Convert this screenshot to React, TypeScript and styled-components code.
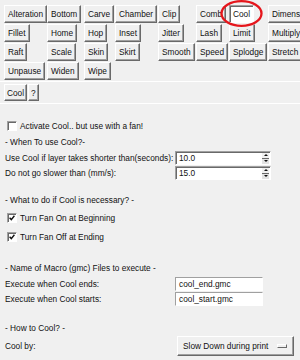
import React from 'react';
import styled, { createGlobalStyle } from 'styled-components';

/* global */
const GlobalStyle = createGlobalStyle`
  html, body {
    margin: 0;
    padding: 0;
    background: #f0f0f0;
  }
  body {
    font-family: "Liberation Sans", Arial, sans-serif;
    font-size: 8.3px;
    color: #111111;
  }
`

const Window = styled.div`
  position: relative;
  width: 300px;
  height: 360px;
  overflow: hidden;
  background: #f0f0f0;
`

/* plugin buttons */
const ToolGrid = styled.div`
  display: grid;
  grid-template-columns: 43px 37px 31px 43px 38px 33px 39px 1fr;
  grid-auto-rows: 18px;
  row-gap: 1px;
  padding: 5px 0 1px 4px;
  border-bottom: 1px solid #ffffff;
`

const ToolButton = styled.button<{ $active?: boolean; $pad?: number }>`
  justify-self: start;
  box-sizing: border-box;
  height: 100%;
  margin: 0;
  padding: 0 ${p => p.$pad ?? 3}px;
  font: inherit;
  color: #111111;
  white-space: nowrap;
  background: ${p => (p.$active ? '#ffffff' : '#f0f0f0')};
  border: 1px solid;
  border-color: ${p => (p.$active ? '#a0a0a0 #ffffff #ffffff #a0a0a0' : '#ffffff #696969 #696969 #ffffff')};
  box-shadow: ${p => (p.$active ? 'inset 1px 1px #696969' : 'inset -1px -1px #a0a0a0')};
`

const SubBar = styled.div`
  display: flex;
  gap: 1px;
  height: 17px;
  padding: 2px 0 2px 4px;
  border-bottom: 1px solid #ffffff;
`

const Highlight = styled.svg`
  position: absolute;
  left: 219px;
  top: 0;
  width: 46px;
  height: 28px;
  pointer-events: none;
`

/* settings */
const Form = styled.div`
  display: flex;
  flex-direction: column;
  padding: 14px 0 0 5px;
`

const Row = styled.div<{ $h: number; $gap?: number }>`
  display: flex;
  align-items: center;
  height: ${p => p.$h}px;
  margin-top: ${p => p.$gap ?? 0}px;
  white-space: nowrap;
`

const Label = styled.span`
  width: 170px;
  flex: none;
`

const CheckBox = styled.span`
  display: flex;
  align-items: center;
  justify-content: center;
  box-sizing: border-box;
  width: 10px;
  height: 10px;
  margin: 0 3px 0 2px;
  background: #ffffff;
  border: 1px solid;
  border-color: #a0a0a0 #ffffff #ffffff #a0a0a0;
  box-shadow: inset 1px 1px #696969;
`

const Spin = styled.div`
  display: flex;
  box-sizing: border-box;
  width: 96px;
  height: 14px;
  background: #ffffff;
  border: 1px solid;
  border-color: #a0a0a0 #ffffff #ffffff #a0a0a0;
  box-shadow: inset 1px 1px #696969;
`

const FieldValue = styled.span`
  flex: 1;
  padding: 1px 0 0 3px;
  line-height: 11px;
`

const SpinArrows = styled.div`
  display: flex;
  flex-direction: column;
  width: 7px;
  margin: 1px 1px 0 0;
`

const Arrow = styled.span<{ $down?: boolean }>`
  flex: 1;
  display: flex;
  align-items: center;
  justify-content: center;
  background: ${p => (p.$down ? '#e3e3e3' : '#f0f0f0')};
  border-top: ${p => (p.$down ? '1px solid #696969' : 'none')};

  &::after {
    content: '';
    border-left: 2px solid transparent;
    border-right: 2px solid transparent;
    ${p => (p.$down ? 'border-top: 2px solid #111;' : 'border-bottom: 2px solid #111;')}
  }
`

const Entry = styled.div`
  display: flex;
  box-sizing: border-box;
  width: 88px;
  height: 14px;
  background: #ffffff;
  border: 1px solid;
  border-color: #a0a0a0 #ffffff #ffffff #a0a0a0;
`

const OptionMenu = styled.div`
  display: flex;
  align-items: center;
  justify-content: space-between;
  box-sizing: border-box;
  width: 117px;
  height: 20px;
  margin-left: 2px;
  padding: 0 6px 0 5px;
  background: #f0f0f0;
  border: 1px solid;
  border-color: #ffffff #696969 #696969 #ffffff;
  box-shadow: inset -1px -1px #a0a0a0;
`

const Indicator = styled.span`
  box-sizing: border-box;
  width: 10px;
  height: 4px;
  border: 1px solid;
  border-color: #ffffff #696969 #696969 #ffffff;
`

const rows = [
  ['Alteration', 'Bottom', 'Carve', 'Chamber', 'Clip', 'Comb', 'Cool', 'Dimension'],
  ['Fillet', 'Home', 'Hop', 'Inset', 'Jitter', 'Lash', 'Limit', 'Multiply'],
  ['Raft', 'Scale', 'Skin', 'Skirt', 'Smooth', 'Speed', 'Splodge', 'Stretch'],
  ['Unpause', 'Widen', 'Wipe'],
]

const Check = ({ checked, text }: { checked?: boolean; text: string }) => (
  <>
    <CheckBox>
      {checked && (
        <svg width="6" height="6" viewBox="0 0 6 6">
          <path d="M0.6 2.8 L2.3 4.6 L5.4 0.8" fill="none" stroke="#111" strokeWidth="1.4" />
        </svg>
      )}
    </CheckBox>
    <span>{text}</span>
  </>
)

const SpinBox = ({ value }: { value: string }) => (
  <Spin>
    <FieldValue>{value}</FieldValue>
    <SpinArrows>
      <Arrow />
      <Arrow $down />
    </SpinArrows>
  </Spin>
)

const App = () => {
  return (
    <Window>
      <GlobalStyle />
      <ToolGrid>
        {rows.map((row, r) =>
          row.map((name, c) => (
            <ToolButton
              key={name}
              style={{ gridRow: r + 1, gridColumn: c + 1 }}
              $active={r === 0 && name === 'Cool'}
            >
              {name}
            </ToolButton>
          ))
        )}
      </ToolGrid>
      <SubBar>
        <ToolButton $pad={2}>Cool</ToolButton>
        <ToolButton $pad={2}>?</ToolButton>
      </SubBar>
      <Highlight viewBox="0 0 46 28">
        <ellipse cx="22.5" cy="13.5" rx="20" ry="12.3" fill="none" stroke="#e5161c" strokeWidth="2.3" />
      </Highlight>

      <Form>
        <Row $h={16}>
          <Check text="Activate Cool.. but use with a fan!" />
        </Row>
        <Row $h={16}>- When To use Cool?-</Row>
        <Row $h={15}>
          <Label>Use Cool if layer takes shorter than(seconds):</Label>
          <SpinBox value="10.0" />
        </Row>
        <Row $h={15}>
          <Label>Do not go slower than (mm/s):</Label>
          <SpinBox value="15.0" />
        </Row>

        <Row $h={17} $gap={11}>- What to do if Cool is necessary? -</Row>
        <Row $h={19}>
          <Check checked text="Turn Fan On at Beginning" />
        </Row>
        <Row $h={19}>
          <Check checked text="Turn Fan Off at Ending" />
        </Row>

        <Row $h={16} $gap={14}>- Name of Macro (gmc) Files to execute -</Row>
        <Row $h={15}>
          <Label>Execute when Cool ends:</Label>
          <Entry><FieldValue>cool_end.gmc</FieldValue></Entry>
        </Row>
        <Row $h={15}>
          <Label>Execute when Cool starts:</Label>
          <Entry><FieldValue>cool_start.gmc</FieldValue></Entry>
        </Row>

        <Row $h={16} $gap={14}>- How to Cool? -</Row>
        <Row $h={20}>
          <Label>Cool by:</Label>
          <OptionMenu>
            <span>Slow Down during print</span>
            <Indicator />
          </OptionMenu>
        </Row>
      </Form>
    </Window>
  );
};

export default App;
